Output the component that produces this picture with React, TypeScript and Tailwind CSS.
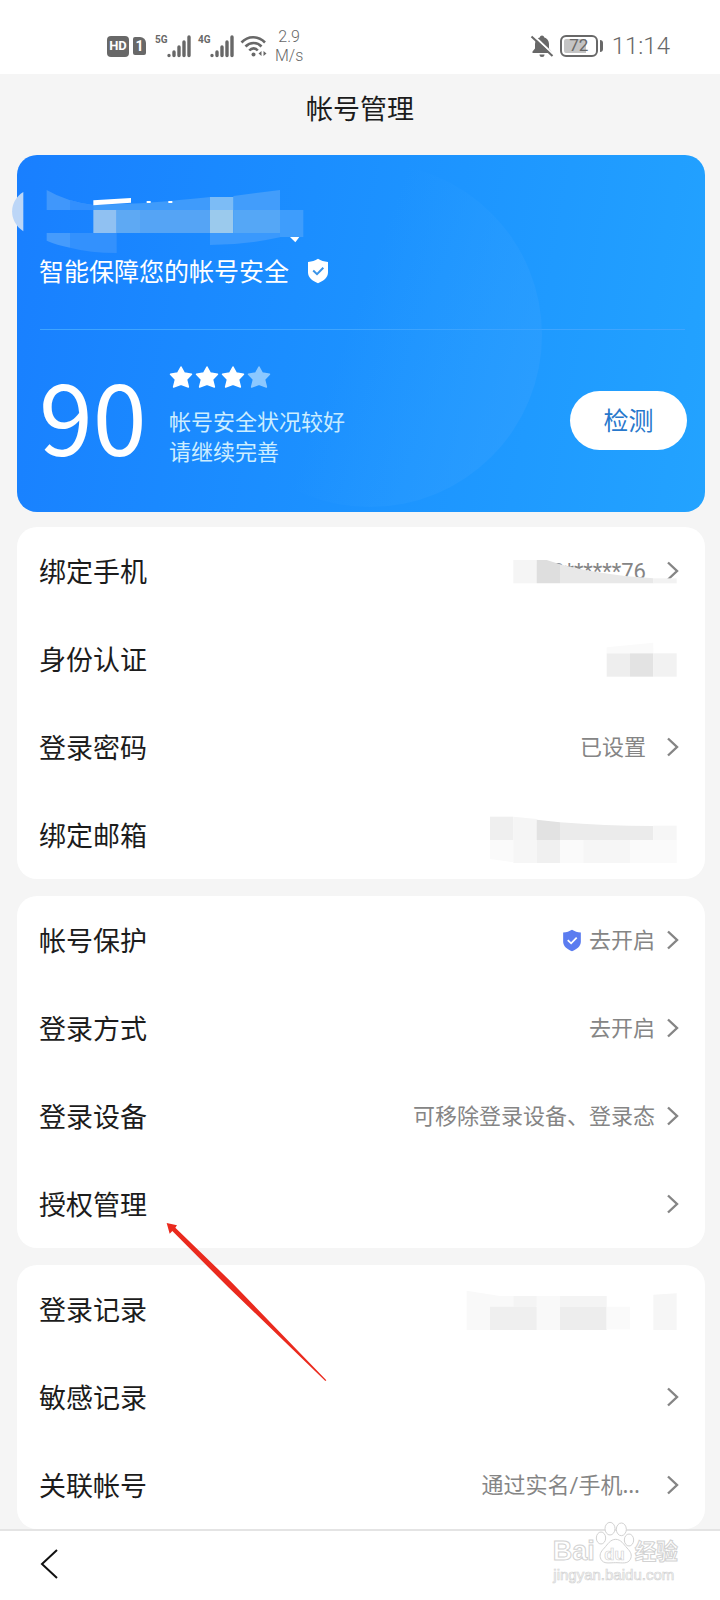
import type { ReactNode } from "react"

interface Row {
  label: string
  value?: string
  shield?: boolean
  ellipsis?: boolean
  hideArrow?: boolean
}

const bindRows: Row[] = [
  { label: "绑定手机", value: "3******76" },
  { label: "身份认证", hideArrow: true },
  { label: "登录密码", value: "已设置" },
  { label: "绑定邮箱", hideArrow: true },
]

const loginRows: Row[] = [
  { label: "帐号保护", value: "去开启", shield: true },
  { label: "登录方式", value: "去开启" },
  { label: "登录设备", value: "可移除登录设备、登录态" },
  { label: "授权管理" },
]

const recordRows: Row[] = [
  { label: "登录记录", hideArrow: true },
  { label: "敏感记录" },
  { label: "关联帐号", value: "通过实名/手机", ellipsis: true },
]

function Signal({ label }: { label: string }) {
  return (
    <div className="flex items-start">
      <span className="w-3 font-['Roboto'] text-[10px] leading-[10px] font-bold">{label}</span>
      <svg className="h-[23px] w-6" viewBox="0 0 24 23" stroke="currentColor" strokeWidth="3.4" strokeLinecap="round">
        <path d="M2 20.5v0M7 17v3.5M12 12v8.5M17 7v13.5M22 2v18.5" />
      </svg>
    </div>
  )
}

function StatusBar() {
  return (
    <div className="flex h-[74px] items-center justify-between bg-white pt-[18px] pr-[50px] pl-[107px] text-[#686868]">
      <div className="flex items-center">
        <span className="flex h-[21px] w-[22px] items-center justify-center rounded bg-[#686868] font-['Roboto'] text-[13px] font-bold text-white">
          HD
        </span>
        <span className="ml-1 flex h-[18px] w-[13px] items-center justify-center rounded-xs rounded-tr-md bg-[#686868] font-['Roboto'] text-sm font-bold text-white">
          1
        </span>
        <div className="ml-[9px] flex gap-[7px]">
          <Signal label="5G" />
          <Signal label="4G" />
        </div>
        <svg className="ml-[6px] h-6 w-7" viewBox="0 0 28 24" fill="none" stroke="currentColor" strokeWidth="2.6">
          <path d="M1.5 8.5C8 1.5 18 1.5 25 8.5M5.5 12.5c4.500-4.700 11.500-4.700 16 0M9.300 16.500c2.500-2.800 6-2.800 8.500 0" />
          <circle cx="13.500" cy="20.500" r="2" fill="currentColor" stroke="none" />
          <path d="M21.500 17v5l-3-2.500zM23.500 17v5l3-2.500z" fill="currentColor" stroke="none" />
        </svg>
        <div className="ml-[7px] text-center font-['Roboto'] text-base leading-[19px] font-light">
          <div>2.9</div>
          <div>M/s</div>
        </div>
      </div>
      <div className="flex items-center">
        <svg className="h-6 w-6" viewBox="0 0 24 24" fill="currentColor">
          <path d="M12 1.500c1.200 0 2 .7 2 1.800 3 .9 5 3.500 5 6.700v4.500l2.500 3V19h-19v-1.500l2.500-3V10c0-3.200 2-5.800 5-6.700 0-1.100.8-1.800 2-1.800zM9.500 20.500h5a2.500 2.500 0 0 1-5 0z" />
          <path d="M3.500 1.500 24 21" stroke="#fff" strokeWidth="2" />
          <path d="M1.500 2.500 22.500 22" stroke="currentColor" strokeWidth="2" />
        </svg>
        <span className="ml-[6px] flex h-[22px] w-[38px] items-center justify-center rounded-md border-2 border-[#686868] bg-linear-to-r from-[#c4c4c4] from-72% to-white to-72% font-['Roboto'] text-[17px] shadow-[inset_0_0_0_2px_#fff]">
          72
        </span>
        <span className="ml-0.5 h-3 w-[3px] rounded-r-sm bg-[#686868]" />
        <span className="ml-[9px] font-['Roboto'] text-2xl font-light">11:14</span>
      </div>
    </div>
  )
}

function ShieldIcon({ className, check }: { className: string; check: string }) {
  return (
    <svg className={className} viewBox="0 0 22 26">
      <path d="M11 .8c3 1.900 6 2.700 10 3.200v10.500c0 5-4.500 8.500-10 10.700C5.500 23 1 19.500 1 14.500V4C5 3.500 8 2.700 11 .8z" fill="currentColor" />
      <path d="m6.200 12.500 3.800 3.700 6.300-6.500" fill="none" stroke={check} strokeWidth="2" />
    </svg>
  )
}

function StarIcon({ className }: { className: string }) {
  return (
    <svg className={className} viewBox="0 0 24 24" fill="currentColor" stroke="currentColor" strokeWidth="1.500" strokeLinejoin="round">
      <path d="m12 2 3.300 6 7.200 1.200-5 5.300 1.900 7.500-7.400-2.800L4.600 22l1.900-7.500-5-5.300L8.700 8z" />
    </svg>
  )
}

function Chevron() {
  return (
    <svg className="h-5 w-3 shrink-0" viewBox="0 0 12 20" fill="none" stroke="#858585" strokeWidth="2.4">
      <path d="m1 1.500 9 8.500-9 8.500" />
    </svg>
  )
}

function SafetyCard() {
  return (
    <section className="relative rounded-[20px] bg-linear-100 from-[#197fff] to-[#23a3ff] text-white">
      <div className="absolute inset-0 overflow-hidden rounded-[20px]">
        <div className="absolute top-2 left-[181px] size-[344px] rounded-full bg-linear-110 from-transparent from-45% to-[#34a0ff]/60" />
      </div>
      {/* blurred user name */}
      <svg className="absolute -top-[15px] -left-[17px] h-[200px] w-[360px]" viewBox="0 0 1080 600">
        <path d="M70 156v118c-45-30-45-90 0-118z" fill="#bcd6f7" />
        <path d="M140 150q60 35 140 45v15H140z" fill="#4097fb" />
        <path d="M210 180q30 10 70 15v15h-70z" fill="#328ffd" />
        <path d="M420 190q130-10 210-19v39H280v-15z" fill="#3f9bfb" />
        <path d="M700 168l140-18v60H700z" fill="#429dfb" />
        <path d="M280 181l113-7v14l-113 8zM440 183h12v6h-12zM505 183h12v6h-12z" fill="#fff" />
        <path d="M630 171h70v39h-70z" fill="#7cbcf6" />
        <path d="M280 210h70v69h-70z" fill="#90c1f2" />
        <path d="M350 210h70v69h-70z" fill="#5ea9f3" />
        <path d="M420 210h210v69H420z" fill="#55a4f5" />
        <path d="M630 210h70v69h-70z" fill="#9bcaed" />
        <path d="M700 210h140v69H700z" fill="#55a7f6" />
        <path d="M840 210h70v81h-70z" fill="#3e9dfc" />
        <path d="M140 279h70v44q-40-8-70-21z" fill="#459bfc" />
        <path d="M210 279h140v60q-80 0-140-16z" fill="#3391fd" />
        <path d="M630 279h210v13q-100 22-210 23z" fill="#3a99fd" />
        <path d="M870 291h28l-12 16z" fill="#fff" />
      </svg>
      <div className="pt-[98px] pb-10 pl-[22px]">
        <div className="flex h-9 items-center gap-[18px] text-[25px]">
          智能保障您的帐号安全
          <ShieldIcon className="h-[26px] w-[22px]" check="#3b94e8" />
        </div>
      </div>
      <div className="mr-5 ml-[23px] h-px bg-[#3fa5ff]" />
      <div className="flex h-[182px] items-center pr-[18px] pl-[22px]">
        <span className="w-[130px] pb-4 font-['Noto_Sans_CJK_SC'] text-[97px] leading-[97px]">90</span>
        <div className="flex-1 pb-3">
          <div className="mb-4 flex gap-[2px]">
            <StarIcon className="size-6" />
            <StarIcon className="size-6" />
            <StarIcon className="size-6" />
            <StarIcon className="size-6 text-[#8cc8ff]" />
          </div>
          <p className="text-[22px] leading-[30px] text-[#cdeeff]">
            帐号安全状况较好
            <br />
            请继续完善
          </p>
        </div>
        <button className="mb-[2px] h-[59px] w-[117px] rounded-full bg-white text-[25px] text-[#2878cc]">检测</button>
      </div>
    </section>
  )
}

function ListCard({ rows, wide, children }: { rows: Row[]; wide?: boolean; children?: ReactNode }) {
  return (
    <section className="relative rounded-[20px] bg-white">
      {rows.map((row) => (
        <a key={row.label} href="#" className="flex h-[88px] items-center pr-[26px] pl-[22px]">
          <span className="flex-1 text-[27px] text-[#1c1c1c]">{row.label}</span>
          {row.shield && <ShieldIcon className="mr-[7px] h-[23px] w-5 text-[#5b7cf0]" check="#fff" />}
          <span className={`font-['Roboto','Noto_Sans_CJK_SC',sans-serif] text-[22px] text-[#858585] ${wide ? "mr-[21px]" : "mr-3"}`}>
            {row.value}
            {row.ellipsis && <span className="mr-[6px] font-['Noto_Sans']">…</span>}
          </span>
          {!row.hideArrow && <Chevron />}
        </a>
      ))}
      {children}
    </section>
  )
}

function Watermark() {
  return (
    <svg className="absolute right-0 bottom-0 h-[140px] w-[200px]" viewBox="0 0 600 420" fill="#fff" stroke="#d2d2d2" strokeWidth="3">
      <ellipse cx="243" cy="234" rx="14" ry="18" />
      <ellipse cx="270" cy="206" rx="15" ry="19" />
      <ellipse cx="304" cy="208" rx="15" ry="19" />
      <ellipse cx="327" cy="240" rx="14" ry="18" />
      <path d="M287 238c16 0 24 15 34 26 12 12 16 22 10 34-8 15-25 10-44 10s-36 5-44-10c-6-12-2-22 10-34 10-11 18-26 34-26z" />
      <g className="font-['Liberation_Sans'] font-bold">
        <text x="98" y="300" fontSize="81">Bai</text>
        <text x="253" y="299" fontSize="50" strokeWidth="2">du</text>
      </g>
      <text x="344" y="298" fontSize="65" className="font-['Noto_Sans_CJK_SC'] font-bold">经验</text>
      <text x="100" y="361" fontSize="45" strokeWidth="2" className="font-['Liberation_Sans']">jingyan.baidu.com</text>
    </svg>
  )
}

export default function App() {
  return (
    <div className="relative bg-[#f5f5f5] font-['Noto_Sans_CJK_SC',sans-serif]" lang="zh-CN">
      <StatusBar />
      <h1 className="flex h-[81px] items-center justify-center pb-3 text-[27px] text-[#1c1c1c]">帐号管理</h1>
      <main className="flex flex-col gap-[17px] pr-[15px] pl-[17px]">
        <div className="-mb-[2px]">
          <SafetyCard />
        </div>
        <ListCard rows={bindRows} wide>
          <svg className="absolute top-[3px] -right-[15px] h-[360px] w-[260px]" viewBox="0 0 780 1080">
            <path d="M260 97q110 36 320 51l75 1v50H225V97z" fill="#fff" />
            <path d="M160 90h70v70h-70z" fill="#f5f5f5" />
            <path d="M230 90h30l40 13v57h-70z" fill="#dedede" />
            <path d="M300 103q120 32 280 42v15H300z" fill="#e8e8e8" />
            <path d="M580 145h70v15h-70z" fill="#f2f2f2" />
            <path d="M440 352l140-14v32H440z" fill="#fafafa" />
            <path d="M440 370h70v70h-70z" fill="#eee" />
            <path d="M510 370h70v70h-70z" fill="#e3e3e3" />
            <path d="M580 370h70v70h-70z" fill="#f2f2f2" />
            <path d="M90 860h70v70H90z" fill="#efefef" />
            <path d="M160 860l70 7v63h-70z" fill="#f5f5f5" />
            <path d="M230 869l70 8v53h-70z" fill="#e2e2e2" />
            <path d="M300 877q130 11 280 11v42H300z" fill="#ebebeb" />
            <path d="M580 887h70v43h-70z" fill="#f6f6f6" />
            <path d="M90 930h70v67l-70-10z" fill="#fafafa" />
            <path d="M160 930h70v69h-70z" fill="#f6f6f6" />
            <path d="M230 930h70v69h-70z" fill="#f0f0f0" />
            <path d="M300 930h70v69h-70zM510 930h140v69H510z" fill="#fafafa" />
            <path d="M370 930h140v69H370z" fill="#f6f6f6" />
          </svg>
        </ListCard>
        <ListCard rows={loginRows}>
          <svg className="absolute top-[304px] left-[123px] z-10 h-[200px] w-[210px]" viewBox="0 0 630 600">
            <path d="M80 69l31 7-5 7 170 165 283 293-3 2L265 262 97 93l-8 8z" fill="#ea2a1e" />
          </svg>
        </ListCard>
        <ListCard rows={recordRows} wide>
          <svg className="absolute -top-[5px] -right-[15px] h-[110px] w-[280px]" viewBox="0 0 840 330">
            <path d="M80 92l100 16h40v32h-70v70H80zM290 108h70v102h-70z" fill="#f9f9f9" />
            <path d="M220 108h70v32h-70zM360 108h140v32H360z" fill="#f4f4f4" />
            <path d="M150 140h140v70H150z" fill="#efefef" />
            <path d="M360 140h140v70H360z" fill="#ededed" />
            <path d="M500 140h70v68h-70z" fill="#fafafa" />
            <path d="M640 104l70-4v110h-70z" fill="#f6f6f6" />
          </svg>
        </ListCard>
      </main>
      <footer className="flex h-[71px] items-center border-t-2 border-[#e4e4e4] bg-white pb-1 pl-10">
        <button aria-label="返回">
          <svg className="h-[30px] w-[18px]" viewBox="0 0 18 30" fill="none" stroke="#111" strokeWidth="2">
            <path d="M17 1 2 15l15 14" />
          </svg>
        </button>
      </footer>
      <Watermark />
    </div>
  )
}
